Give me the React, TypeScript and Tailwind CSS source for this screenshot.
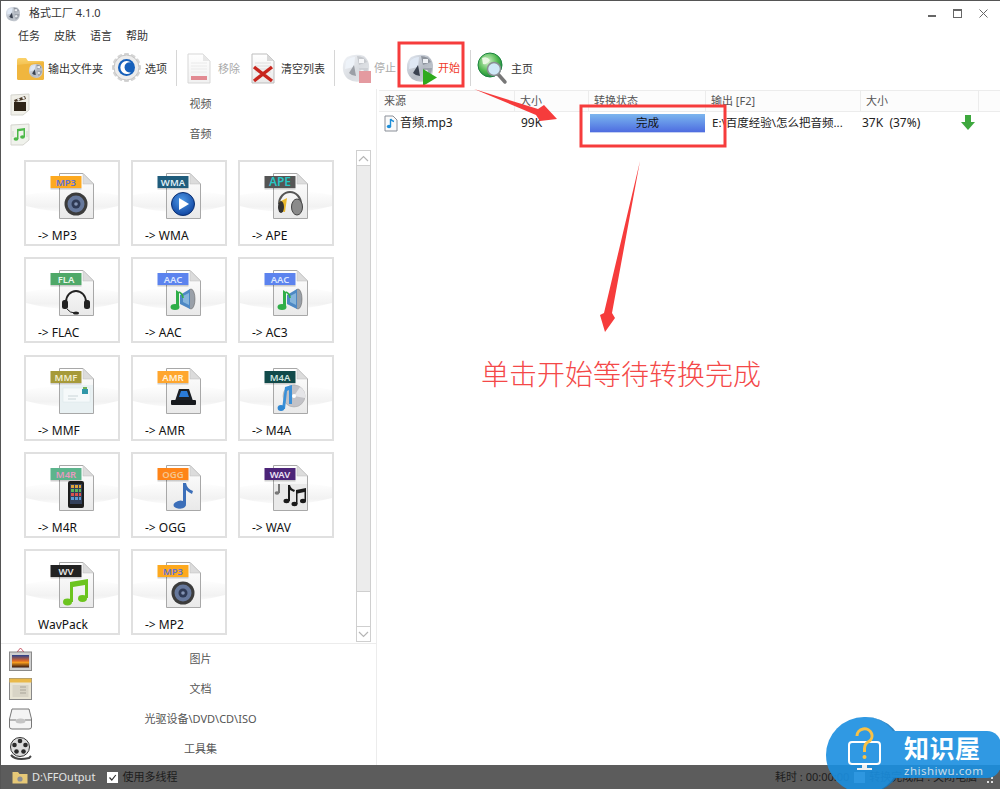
import React from 'react';

const uiFont = { fontFamily: '"Noto Sans", "Noto Sans CJK SC", sans-serif' };

function Defs() {
  return (
    <svg className="absolute w-0 h-0">
      <defs>
        <linearGradient id="docFill" x1="0" y1="0" x2="0" y2="1">
          <stop offset="0" stopColor="#ffffff" />
          <stop offset="1" stopColor="#e9e9e9" />
        </linearGradient>
        <linearGradient id="swoosh" x1="0" y1="0" x2="0" y2="1">
          <stop offset="0" stopColor="#ffffff" />
          <stop offset="0.75" stopColor="#f2f2f2" />
          <stop offset="1" stopColor="#fbfbfb" />
        </linearGradient>
        <linearGradient id="folderFill" x1="0" y1="0" x2="0" y2="1">
          <stop offset="0" stopColor="#fbd26a" />
          <stop offset="1" stopColor="#e2a021" />
        </linearGradient>
        <linearGradient id="sunset" x1="0" y1="0" x2="0" y2="1">
          <stop offset="0" stopColor="#26418f" />
          <stop offset="0.45" stopColor="#d9662a" />
          <stop offset="0.6" stopColor="#f59a1e" />
          <stop offset="1" stopColor="#33140f" />
        </linearGradient>
        <linearGradient id="logoFill" x1="0" y1="0" x2="1" y2="1">
          <stop offset="0" stopColor="#e6ecf5" />
          <stop offset="0.55" stopColor="#b4bac3" />
          <stop offset="1" stopColor="#cfd3d9" />
        </linearGradient>
        <radialGradient id="globeFill" cx="0.4" cy="0.35" r="0.7">
          <stop offset="0" stopColor="#d9f3d0" />
          <stop offset="0.6" stopColor="#4fb84f" />
          <stop offset="1" stopColor="#17813a" />
        </radialGradient>
        <radialGradient id="discBlue" cx="0.45" cy="0.35" r="0.7">
          <stop offset="0" stopColor="#4f9be8" />
          <stop offset="1" stopColor="#0c3f9c" />
        </radialGradient>
      </defs>
    </svg>
  );
}

function LogoShape() {
  return (
    <>
      <path d="M6 4 Q15 0 23 3 Q29 8 28 16 Q28 24 21 28 Q13 30 7 26 Q1 21 2 13 Q2 8 6 4 Z" fill="url(#logoFill)" />
      <path d="M5 8 Q9 4 14 4 L13 14 L4 16 Z" fill="#dfe8f4" />
      <path d="M8 20 L13 12 L15 23 Q11 23 8 20 Z" fill="#3a4250" />
      <path d="M16 3 Q23 3 26 9 L18 12 Z" fill="#8f959e" />
      <rect x="18" y="6" width="5" height="4" fill="#eef1f5" />
      <path d="M18 15 L27 15 Q27 22 20 26 Z" fill="#9da3ac" />
      <circle cx="21" cy="19" r="2.2" fill="#e4e7eb" />
    </>
  );
}

function FFLogo({ size = 30, opacity = 1 }: { size?: number; opacity?: number }) {
  return (
    <svg width={size} height={size} viewBox="0 0 30 30" opacity={opacity} className="shrink-0">
      <LogoShape />
    </svg>
  );
}

function Tool({ icon, label, className, textClass }: { icon: React.ReactNode; label: string; className: string; textClass: string }) {
  return (
    <div className={`flex items-center ${className}`}>
      {icon}
      <span className={`text-[11px] leading-none whitespace-nowrap ${textClass}`}>{label}</span>
    </div>
  );
}

function FolderIcon() {
  return (
    <svg width="29" height="26" viewBox="0 0 29 26" className="shrink-0">
      <path d="M1 5 Q1 3 3 3 L10 3 L12 6 L27 6 Q28 6 28 8 L28 23 Q28 25 26 25 L3 25 Q1 25 1 23 Z" fill="url(#folderFill)" />
      <path d="M1 10 L28 7 L28 23 Q28 25 26 25 L3 25 Q1 25 1 23 Z" fill="#f0b63e" />
      <g transform="translate(12 8) scale(0.52)">
        <LogoShape />
      </g>
    </svg>
  );
}

function GearIcon() {
  const teeth = Array.from({ length: 12 }, (_, i) => i * 30);
  return (
    <svg width="31" height="32" viewBox="0 0 31 32" className="shrink-0">
      {teeth.map((a) => (
        <rect key={a} x="13" y="1" width="5" height="6" rx="1" fill="#d4d4d4" transform={`rotate(${a} 15.5 15.5)`} />
      ))}
      <circle cx="15.5" cy="15.5" r="12.5" fill="#ececec" stroke="#c6c6c6" />
      <circle cx="15.5" cy="15.5" r="8.5" fill="#1660bb" />
      <path d="M20 10.5 A6.5 6.5 0 1 0 20 20.5 A5.5 5.5 0 0 1 13.5 15.5 A5 5 0 0 1 20 10.5 Z" fill="#ffffff" />
    </svg>
  );
}

function PageIcon({ faded }: { faded?: boolean }) {
  return (
    <svg width="24" height="31" viewBox="0 0 24 31" className="shrink-0" opacity={faded ? 0.6 : 1}>
      <path d="M1 1 H16 L23 8 V30 H1 Z" fill="url(#docFill)" stroke="#bdbdbd" />
      <path d="M16 1 V8 H23 Z" fill="#d8d8d8" />
      {[10, 13, 16, 19].map((y) => (
        <line key={y} x1="4" x2="20" y1={y} y2={y} stroke="#dedede" />
      ))}
      {faded ? (
        <rect x="4" y="23" width="16" height="4" fill="#cf3d4b" />
      ) : (
        <path d="M3 14 L21 28 M21 14 L3 28" stroke="#c8261e" strokeWidth="3.4" />
      )}
    </svg>
  );
}

function GlobeIcon() {
  return (
    <svg width="31" height="33" viewBox="0 0 31 33" className="shrink-0">
      <circle cx="13" cy="13" r="12" fill="url(#globeFill)" stroke="#1c8440" />
      <path d="M5 6 Q10 4 13 8 Q10 13 6 12 Z M15 15 Q20 14 21 18 Q18 23 15 21 Z" fill="#e9f7e3" />
      <line x1="20" y1="21" x2="28" y2="30" stroke="#777" strokeWidth="3.5" strokeLinecap="round" />
      <circle cx="17" cy="17" r="6.5" fill="#cfe8f7" stroke="#8a8f94" strokeWidth="1.5" />
    </svg>
  );
}

function Separator({ className }: { className: string }) {
  return <div className={`w-px h-[36px] bg-[#d6d6d6] shrink-0 ${className}`} />;
}

function Doc() {
  return (
    <>
      <path d="M33.5 11.5 H57 L67.5 22 V56.5 H33.5 Z" fill="url(#docFill)" stroke="#a8a8a8" />
      <path d="M57 11.5 V22 H67.5 Z" fill="#dcdcdc" stroke="#bdbdbd" strokeWidth="0.5" />
    </>
  );
}

type Art = 'speaker' | 'play' | 'phones' | 'headset' | 'aac' | 'mail' | 'scanner' | 'cd' | 'phone' | 'note' | 'notes' | 'wv';

function Artwork({ kind }: { kind: Art }) {
  switch (kind) {
    case 'speaker':
      return (
        <g>
          <circle cx="50" cy="42" r="11.5" fill="#3c3c3c" />
          <circle cx="50" cy="42" r="8.5" fill="#66789c" />
          <circle cx="50" cy="42" r="4.5" fill="#2f3a55" />
          <circle cx="50" cy="42" r="1.8" fill="#8494b5" />
        </g>
      );
    case 'play':
      return (
        <g>
          <circle cx="50" cy="42" r="11.5" fill="url(#discBlue)" stroke="#0b2f70" />
          <path d="M46 36 L56 42 L46 48 Z" fill="#ffffff" />
        </g>
      );
    case 'phones':
      return (
        <g>
          <path d="M39 42 A11 12 0 0 1 61 42" fill="none" stroke="#555" strokeWidth="2" />
          <path d="M39 40 L47 36 L45 50 L39 49 Z" fill="#e9b82c" />
          <ellipse cx="57" cy="45" rx="5.5" ry="8" fill="#8a8a8a" stroke="#444" />
          <ellipse cx="41" cy="45" rx="3" ry="6" fill="#333" />
        </g>
      );
    case 'headset':
      return (
        <g>
          <path d="M40 43 A10 11 0 0 1 60 43" fill="none" stroke="#222" strokeWidth="1.8" />
          <rect x="36" y="41" width="6" height="9" rx="2.5" fill="#222" />
          <rect x="58" y="41" width="6" height="9" rx="2.5" fill="#222" />
          <path d="M41 50 Q44 54 49 54" fill="none" stroke="#222" />
          <ellipse cx="50" cy="54" rx="3" ry="1.6" fill="#222" />
        </g>
      );
    case 'aac':
      return (
        <g>
          <ellipse cx="58" cy="40" rx="4" ry="10" fill="#9aa0a8" stroke="#666" strokeWidth="0.6" />
          <path d="M47 36 L57 30 L57 50 L47 45 Z" fill="#4d88c4" />
          <path d="M50 37 L56 34 L56 46 L50 43 Z" fill="#86b5dc" />
          <path d="M43 31 L46 33 L46 47 L43 47 Z" fill="#2fae48" />
          <ellipse cx="42" cy="48" rx="4.5" ry="3" fill="#2fae48" />
          <path d="M46 33 Q50 35 50 39" fill="none" stroke="#2fae48" strokeWidth="1.6" />
        </g>
      );
    case 'mail':
      return (
        <g>
          <rect x="34" y="28" width="33" height="28" fill="#e9f1f3" />
          <rect x="37" y="31" width="27" height="14" fill="#f5f9fa" stroke="#dbe5e8" strokeWidth="0.5" />
          <rect x="56" y="32" width="6" height="5" fill="#2f97a8" />
          <rect x="57" y="30" width="4" height="2" fill="#70b15a" />
          <path d="M42 39 H52 M42 42 H50" stroke="#cad5d8" />
        </g>
      );
    case 'scanner':
      return (
        <g>
          <path d="M42 44 L46 32 H56 L60 44 Z" fill="#1c2026" />
          <path d="M46 40 L48 34 H54 L56 40 Z" fill="#2a7bd8" />
          <rect x="38" y="43" width="25" height="5" rx="1" fill="#16181c" />
        </g>
      );
    case 'cd':
      return (
        <g>
          <circle cx="54" cy="39" r="11" fill="#c2c2c7" stroke="#a0a0a0" strokeWidth="0.5" />
          <path d="M54 39 L60 30 A11 11 0 0 1 65 41 Z" fill="#e5e5e8" />
          <circle cx="54" cy="39" r="2" fill="#ffffff" />
          <path d="M45 30 L52 28 L52 47 L49 47 L49 33 L47 34 L45 52 L42 52 Z" fill="#3a90d8" />
          <ellipse cx="41" cy="51" rx="3.4" ry="3" fill="#2f87d2" />
        </g>
      );
    case 'phone':
      return (
        <g>
          <rect x="42" y="27" width="16" height="27" rx="2" fill="#1d1d1d" />
          <rect x="44" y="30" width="12" height="20" fill="#33405a" />
          <path d="M45 31 h3 v3 h-3z M49 31 h3 v3 h-3z M53 31 h2 v3 h-2z" fill="#e0a43a" />
          <path d="M45 35 h3 v3 h-3z M49 35 h3 v3 h-3z M53 35 h2 v3 h-2z" fill="#5cb85c" />
          <path d="M45 39 h3 v3 h-3z M49 39 h3 v3 h-3z M53 39 h2 v3 h-2z" fill="#d9534f" />
          <path d="M45 43 h3 v3 h-3z M49 43 h3 v3 h-3z M53 43 h2 v3 h-2z" fill="#5b9bd5" />
        </g>
      );
    case 'note':
      return (
        <g>
          <path d="M50 29 L53 29 Q54 35 60 37 L59 40 Q55 38 53 36 L53 50 A5.5 4 0 1 1 50 47 Z" fill="#3c6fb9" />
          <ellipse cx="46" cy="51" rx="5.5" ry="3.6" fill="#3c6fb9" />
        </g>
      );
    case 'notes':
      return (
        <g fill="#1a1a1a">
          <rect x="34" y="30" width="33" height="26" fill="#e9e9e9" />
          <path d="M48 31 L50 31 Q51 35 55 36 L54 38 L50 36 L50 47 L48 47 Z" />
          <ellipse cx="46.5" cy="47" rx="3" ry="2.2" />
          <path d="M56 36 L66 34 L66 47 L64.5 47 L64.5 38 L57.5 39.5 L57.5 50 L56 50 Z" />
          <ellipse cx="54.5" cy="50" rx="3" ry="2.2" />
          <ellipse cx="63" cy="47" rx="3" ry="2.2" />
          <path d="M38 30 L40 30 L40 39 L38 39 Z" fill="#777" />
          <ellipse cx="37" cy="39" rx="2.4" ry="1.8" fill="#777" />
        </g>
      );
    case 'wv':
      return (
        <g fill="#6cc41e">
          <path d="M44 31 L62 28 L62 47 L59 47 L59 34 L47 36 L47 51 L44 51 Z" />
          <ellipse cx="41.5" cy="51" rx="4.5" ry="3.4" />
          <ellipse cx="56.5" cy="47.5" rx="4.5" ry="3.4" />
        </g>
      );
  }
}

interface Format {
  label: string;
  tag: string;
  bg: string;
  fg: string;
  art: Art;
  size?: number;
}

const formats: Format[] = [
  { label: '-> MP3', tag: 'MP3', bg: '#fda91f', fg: '#5b70d8', art: 'speaker' },
  { label: '-> WMA', tag: 'WMA', bg: '#1f5c7c', fg: '#dfeef6', art: 'play' },
  { label: '-> APE', tag: 'APE', bg: '#555555', fg: '#27c6c6', art: 'phones', size: 12 },
  { label: '-> FLAC', tag: 'FLA', bg: '#4fa868', fg: '#e8f7ea', art: 'headset' },
  { label: '-> AAC', tag: 'AAC', bg: '#5c83ee', fg: '#dbe6ff', art: 'aac' },
  { label: '-> AC3', tag: 'AAC', bg: '#5c83ee', fg: '#dbe6ff', art: 'aac' },
  { label: '-> MMF', tag: 'MMF', bg: '#a69a3a', fg: '#f2eed0', art: 'mail' },
  { label: '-> AMR', tag: 'AMR', bg: '#ffa62e', fg: '#fff3dc', art: 'scanner' },
  { label: '-> M4A', tag: 'M4A', bg: '#114a4a', fg: '#cfe5e0', art: 'cd' },
  { label: '-> M4R', tag: 'M4R', bg: '#5cb48c', fg: '#e59ac0', art: 'phone' },
  { label: '-> OGG', tag: 'OGG', bg: '#ff8418', fg: '#f6c68e', art: 'note' },
  { label: '-> WAV', tag: 'WAV', bg: '#4c2478', fg: '#ece2f5', art: 'notes' },
  { label: 'WavPack', tag: 'WV', bg: '#222222', fg: '#e8e8e8', art: 'wv' },
  { label: '-> MP2', tag: 'MP3', bg: '#fda91f', fg: '#5b70d8', art: 'speaker' },
];

function Tile({ format }: { format: Format }) {
  return (
    <div className="w-[96px] h-[86px] border-2 border-[#e0e0e0] bg-white flex flex-col overflow-hidden">
      <svg width="92" height="60" viewBox="0 0 92 60" className="shrink-0">
        <path d="M0 33 Q46 24 92 33 L92 44 Q46 56 0 44 Z" fill="url(#swoosh)" />
        <Doc />
        <Artwork kind={format.art} />
        <rect x="24.5" y="14" width="31" height="12" fill={format.bg} />
        <rect x="24.5" y="26" width="31" height="1.5" fill="#000" opacity="0.18" />
        <text x="40" y="23.8" textAnchor="middle" fontSize={format.size ?? 9.5} fontWeight="600" fill={format.fg} fontFamily="Noto Sans, sans-serif">
          {format.tag}
        </text>
      </svg>
      <div className="pl-[12px] mt-[6px] text-[12px] leading-[16px] text-[#111] whitespace-nowrap">{format.label}</div>
    </div>
  );
}

function AccordionRow({ icon, label }: { icon: React.ReactNode; label: string }) {
  return (
    <div className="h-[30px] shrink-0 flex items-center pl-[6px]">
      <div className="w-[26px] flex justify-center">{icon}</div>
      <div className="flex-1 pr-[8px] text-center text-[11px] text-[#555] whitespace-nowrap">{label}</div>
    </div>
  );
}

function ClapIcon() {
  return (
    <svg width="20" height="23" viewBox="0 0 20 23">
      <path d="M1 2 L19 1 L19 17 L13 22 L1 22 Z" fill="#f0efe8" stroke="#d5d5cf" />
      <rect x="4" y="9" width="12" height="9" fill="#2f2518" />
      <path d="M4 7 L15 3 L16 6 L5 9 Z" fill="#4a3a28" />
      <path d="M7 6 l2 -1 l1 2 l-2 1 z M12 4.5 l2 -1 l1 2 l-2 1 z" fill="#eee" />
    </svg>
  );
}

function MusicTabIcon() {
  return (
    <svg width="20" height="23" viewBox="0 0 20 23">
      <path d="M1 2 L19 1 L19 17 L13 22 L1 22 Z" fill="#f0f2ec" stroke="#d5d5cf" />
      <path d="M7 6 L15 5 L15 14 L13.5 14 L13.5 7.5 L8.5 8.2 L8.5 16 L7 16 Z" fill="#4cb848" />
      <ellipse cx="6" cy="16" rx="2.4" ry="1.8" fill="#4cb848" />
      <ellipse cx="12.5" cy="14" rx="2.4" ry="1.8" fill="#4cb848" />
      <path d="M3 8 V14 M17 8 V14" stroke="#cfd8cc" />
    </svg>
  );
}

function PictureIcon() {
  return (
    <svg width="23" height="23" viewBox="0 0 23 23">
      <path d="M11.5 0 L15 4 H8 Z" fill="none" stroke="#b34" strokeWidth="0.8" />
      <rect x="0.5" y="4" width="22" height="18.5" fill="#cfcfcf" stroke="#8a8a8a" />
      <rect x="3" y="7" width="17" height="12.5" fill="url(#sunset)" />
    </svg>
  );
}

function NotesIcon() {
  return (
    <svg width="23" height="22" viewBox="0 0 23 22">
      <rect x="0.5" y="0.5" width="22" height="21" fill="#e8e4d4" stroke="#888" />
      <rect x="0.5" y="0.5" width="22" height="4" fill="#e9b949" />
      <rect x="3.5" y="7" width="16" height="12" fill="#d8d4c6" />
      <path d="M11 9 H17 M11 12 H17 M11 15 H17" stroke="#a8a498" />
    </svg>
  );
}

function DiscDriveIcon() {
  return (
    <svg width="23" height="22" viewBox="0 0 23 22">
      <path d="M3 1 H20 L22.5 11 V19 Q22.5 21 20 21 H3 Q0.5 21 0.5 19 V11 Z" fill="#f4f4f4" stroke="#777" />
      <path d="M0.5 12 H7 Q11.5 17 16 12 H22.5" fill="none" stroke="#777" />
      <ellipse cx="11.5" cy="13" rx="5" ry="2.5" fill="#c4c4c4" />
    </svg>
  );
}

function ReelIcon() {
  return (
    <svg width="23" height="24" viewBox="0 0 23 24">
      <circle cx="11" cy="10" r="9.5" fill="#dcdcdc" stroke="#333" />
      {[[11, 4], [5.5, 8], [16.5, 8], [7.5, 14.5], [14.5, 14.5]].map(([x, y]) => (
        <circle key={`${x}-${y}`} cx={x} cy={y} r="2.3" fill="#2a2a2a" />
      ))}
      <path d="M2 18 Q7 24 20 21 L22 19" fill="none" stroke="#444" strokeWidth="2" />
    </svg>
  );
}

function Chevron({ up }: { up?: boolean }) {
  return (
    <svg width="11" height="7" viewBox="0 0 11 7">
      <path d={up ? 'M1 6 L5.5 1.5 L10 6' : 'M1 1 L5.5 5.5 L10 1'} fill="none" stroke="#b5b5b5" strokeWidth="1.2" />
    </svg>
  );
}

function Scrollbar() {
  return (
    <div className="w-[15px] shrink-0 flex flex-col border border-[#cfcfcf] bg-white mt-[1px]">
      <div className="h-[15px] shrink-0 flex items-center justify-center border-b border-[#cfcfcf]">
        <Chevron up />
      </div>
      <div className="h-[426px] shrink-0 bg-[#ececec] border-b border-[#cfcfcf]" />
      <div className="flex-1" />
      <div className="h-[15px] shrink-0 flex items-center justify-center border-t border-[#cfcfcf]">
        <Chevron />
      </div>
    </div>
  );
}

function ColumnHead({ width, label }: { width: string; label: string }) {
  return <div className={`${width} shrink-0 h-full flex items-center pl-[5px] border-r border-[#ececec] whitespace-nowrap`}>{label}</div>;
}

function Annotations() {
  return (
    <svg className="absolute inset-0 pointer-events-none" width="1000" height="789" viewBox="0 0 1000 789">
      <rect x="398" y="42" width="64" height="43" fill="none" stroke="#f63c3c" strokeWidth="3" />
      <rect x="580" y="105" width="144" height="40" fill="none" stroke="#f63c3c" strokeWidth="3" />
      <path d="M473 88 L537 108 L543 104 L556 118 L539 120 L535 114 Z" fill="#f63c3c" />
      <path d="M639 160 L603 312 L599 314 L604 331 L614 317 L611 312 Z" fill="#f63c3c" />
    </svg>
  );
}

function Watermark() {
  return (
    <div className="absolute left-[825px] top-[716px] w-[175px] h-[76px] opacity-90" style={uiFont}>
      <div className="absolute left-0 top-0 w-[78px] h-[76px] rounded-full bg-[#1a8fe0] border-r-[3px] border-[#1778bd]" />
      <div className="absolute left-[40px] top-[14px] right-0 h-[47px] rounded-r-[14px] bg-[#1a8fe0]" />
      <svg className="absolute left-[20px] top-[10px]" width="38" height="46" viewBox="0 0 38 46">
        <rect x="3" y="15" width="31" height="22" rx="3" fill="none" stroke="#fff" strokeWidth="2" />
        <path d="M16 37 H21 V41 H26 V43 H11 V41 H16 Z" fill="#fff" />
        <path d="M11 9 A7.5 7 0 1 1 22 15 Q18.5 17 18.5 22 V25" fill="none" stroke="#f8bb32" strokeWidth="3" />
        <circle cx="18.5" cy="30" r="2" fill="#f8bb32" />
      </svg>
      <div className="absolute left-[78px] top-[15px] text-[25px] leading-[32px] font-bold text-white tracking-[0.5px] whitespace-nowrap">知识屋</div>
      <div className="absolute left-[78px] top-[46px] text-[11.5px] leading-[16px] text-[#d5ebfa] tracking-[0.5px] whitespace-nowrap">zhishiwu.com</div>
    </div>
  );
}

export default function App() {
  return (
    <div className="relative w-[1000px] h-[789px] overflow-hidden bg-white text-[#222] flex flex-col border-t border-l border-[#555]" style={uiFont}>
      <Defs />

      {/* Title bar */}
      <div className="h-[25px] shrink-0 flex items-center pl-[4px]">
        <FFLogo size={16} />
        <span className="ml-[8px] text-[11px] text-[#333] whitespace-nowrap">格式工厂 4.1.0</span>
        <div className="ml-auto flex items-center gap-[17px] pr-[12px] text-[#666]">
          <div className="w-[8px] h-[2px] mt-[4px] bg-[#666]" />
          <div className="w-[9px] h-[9px] border border-[#666] border-t-2" />
          <svg width="9" height="9" viewBox="0 0 9 9">
            <path d="M0.5 0.5 L8.5 8.5 M8.5 0.5 L0.5 8.5" stroke="#666" />
          </svg>
        </div>
      </div>

      {/* Menu */}
      <div className="h-[21px] shrink-0 flex items-center pl-[17px] gap-[14px] text-[11px] text-[#333]">
        <span>任务</span>
        <span>皮肤</span>
        <span>语言</span>
        <span>帮助</span>
      </div>

      {/* Toolbar */}
      <div className="h-[42px] shrink-0 flex items-center pl-[15px]">
        <Tool icon={<FolderIcon />} label="输出文件夹" className="gap-[3px]" textClass="text-[#333]" />
        <Tool icon={<GearIcon />} label="选项" className="gap-[3px] ml-[8px]" textClass="text-[#333]" />
        <Separator className="ml-[9px]" />
        <Tool icon={<PageIcon faded />} label="移除" className="gap-[7px] ml-[10px]" textClass="text-[#aaa]" />
        <Tool icon={<PageIcon />} label="清空列表" className="gap-[6px] ml-[11px]" textClass="text-[#333]" />
        <Separator className="ml-[9px]" />
        <div className="flex items-center gap-[3px] ml-[6px]">
          <div className="relative shrink-0">
            <FFLogo opacity={0.5} />
            <div className="absolute right-0 bottom-0 w-[12px] h-[12px] bg-[#e49aa0]" />
          </div>
          <span className="text-[11px] text-[#aaa] whitespace-nowrap">停止</span>
        </div>
        <div className="flex items-center gap-[3px] ml-[9px]">
          <div className="relative shrink-0">
            <FFLogo />
            <svg className="absolute right-[-3px] bottom-[-3px]" width="16" height="17" viewBox="0 0 16 17">
              <path d="M1 0 L15 8.5 L1 17 Z" fill="#2faa1c" />
            </svg>
          </div>
          <span className="text-[11px] text-[#f03a2a] whitespace-nowrap">开始</span>
        </div>
        <Separator className="ml-[10px]" />
        <Tool icon={<GlobeIcon />} label="主页" className="gap-[3px] ml-[6px]" textClass="text-[#333]" />
      </div>

      {/* Main */}
      <div className="flex-1 min-h-0 flex">
        <div className="w-[376px] shrink-0 flex flex-col border-r border-[#ececec]">
          <AccordionRow icon={<ClapIcon />} label="视频" />
          <AccordionRow icon={<MusicTabIcon />} label="音频" />
          <div className="flex-1 min-h-0 flex pl-[23px] pr-[5px]">
            <div className="flex-1 pt-[11px]">
              <div className="grid grid-cols-[96px_96px_96px] gap-x-[11px] gap-y-[11.3px]">
                {formats.map((f) => (
                  <Tile key={f.label} format={f} />
                ))}
              </div>
            </div>
            <Scrollbar />
          </div>
          <div className="shrink-0 border-t border-[#ececec] mt-[1px] pb-[1px]">
            <AccordionRow icon={<PictureIcon />} label="图片" />
            <AccordionRow icon={<NotesIcon />} label="文档" />
            <AccordionRow icon={<DiscDriveIcon />} label="光驱设备\DVD\CD\ISO" />
            <AccordionRow icon={<ReelIcon />} label="工具集" />
          </div>
        </div>

        {/* Task list */}
        <div className="flex-1 min-w-0 pl-[2px] pt-[1px]">
          <div className="h-[22px] flex items-center bg-[#fcfcfc] border-y border-[#ececec] text-[11px] text-[#555]">
            <ColumnHead width="w-[136px]" label="来源" />
            <ColumnHead width="w-[74px]" label="大小" />
            <ColumnHead width="w-[117px]" label="转换状态" />
            <ColumnHead width="w-[155px]" label="输出 [F2]" />
            <ColumnHead width="w-[118px]" label="大小" />
          </div>
          <div className="h-[22px] flex items-center text-[12px] text-[#222] whitespace-nowrap">
            <div className="w-[136px] shrink-0 flex items-center gap-[2px] pl-[5px]">
              <svg width="14" height="17" viewBox="0 0 14 17">
                <path d="M1 1 H9 L13 5 V16 H1 Z" fill="#fafafa" stroke="#8a8f98" />
                <path d="M6.5 4 V11 M6.5 4 Q8 6 10 6.5" fill="none" stroke="#1d8ed8" strokeWidth="1.4" />
                <ellipse cx="5" cy="11.5" rx="2.2" ry="1.8" fill="#1d8ed8" />
              </svg>
              <span>音频.mp3</span>
            </div>
            <div className="w-[74px] shrink-0 pl-[6px]">99K</div>
            <div className="w-[117px] shrink-0 pr-px pl-px">
              <div className="h-[19px] flex items-center justify-center text-[11.5px] text-[#111] bg-gradient-to-b from-[#7db6ee] to-[#4f6ce0] border-b border-[#c4d0f2]">完成</div>
            </div>
            <div className="w-[155px] shrink-0 pl-[6px] text-[11.5px]">E:\百度经验\怎么把音频...</div>
            <div className="w-[100px] shrink-0 pl-[1px]">37K&nbsp; (37%)</div>
            <svg width="14" height="15" viewBox="0 0 14 15" className="shrink-0 mb-[2px]">
              <path d="M4 0 H10 V7 H14 L7 15 L0 7 H4 Z" fill="#3ea83e" />
            </svg>
          </div>
        </div>
      </div>

      {/* Status bar */}
      <div className="h-[24px] shrink-0 bg-[#5c5c5c] flex items-center pl-[11px] text-[11px] whitespace-nowrap">
        <svg width="16" height="13" viewBox="0 0 16 13" className="shrink-0">
          <path d="M0.5 1 H6 L7.5 3 H15.5 V12.5 H0.5 Z" fill="#e6c877" />
          <circle cx="8" cy="8" r="2.6" fill="#8c8f95" />
        </svg>
        <span className="ml-[4px] text-[#e4e4e4]">D:\FFOutput</span>
        <div className="ml-[12px] w-[11px] h-[11px] bg-white flex items-center justify-center shrink-0">
          <svg width="9" height="9" viewBox="0 0 9 9">
            <path d="M1.5 4.5 L3.8 7 L7.8 2" fill="none" stroke="#333" strokeWidth="1.2" />
          </svg>
        </div>
        <span className="ml-[4px] text-[#1c1c1c]">使用多线程</span>
        <span className="ml-auto text-[#1c1c1c]">耗时 : 00:00:00</span>
        <span className="ml-[5px] w-[11px] h-[11px] bg-[#e8e8e8] shrink-0" />
        <span className="ml-[4px] text-[#1c1c1c]">转换完成后 : 关闭电脑</span>
        <svg width="6" height="6" viewBox="0 0 6 6" className="ml-[10px] mr-[7px] mt-[6px] shrink-0">
          <path d="M4 0 h2 v2 h-2z M0 4 h2 v2 h-2z M4 4 h2 v2 h-2z" fill="#ddd" />
        </svg>
      </div>

      <Annotations />
      <div className="absolute left-[480px] top-[353px] text-[28px] leading-[40px] font-light text-[#f44848] whitespace-nowrap">单击开始等待转换完成</div>
      <Watermark />
    </div>
  );
}
